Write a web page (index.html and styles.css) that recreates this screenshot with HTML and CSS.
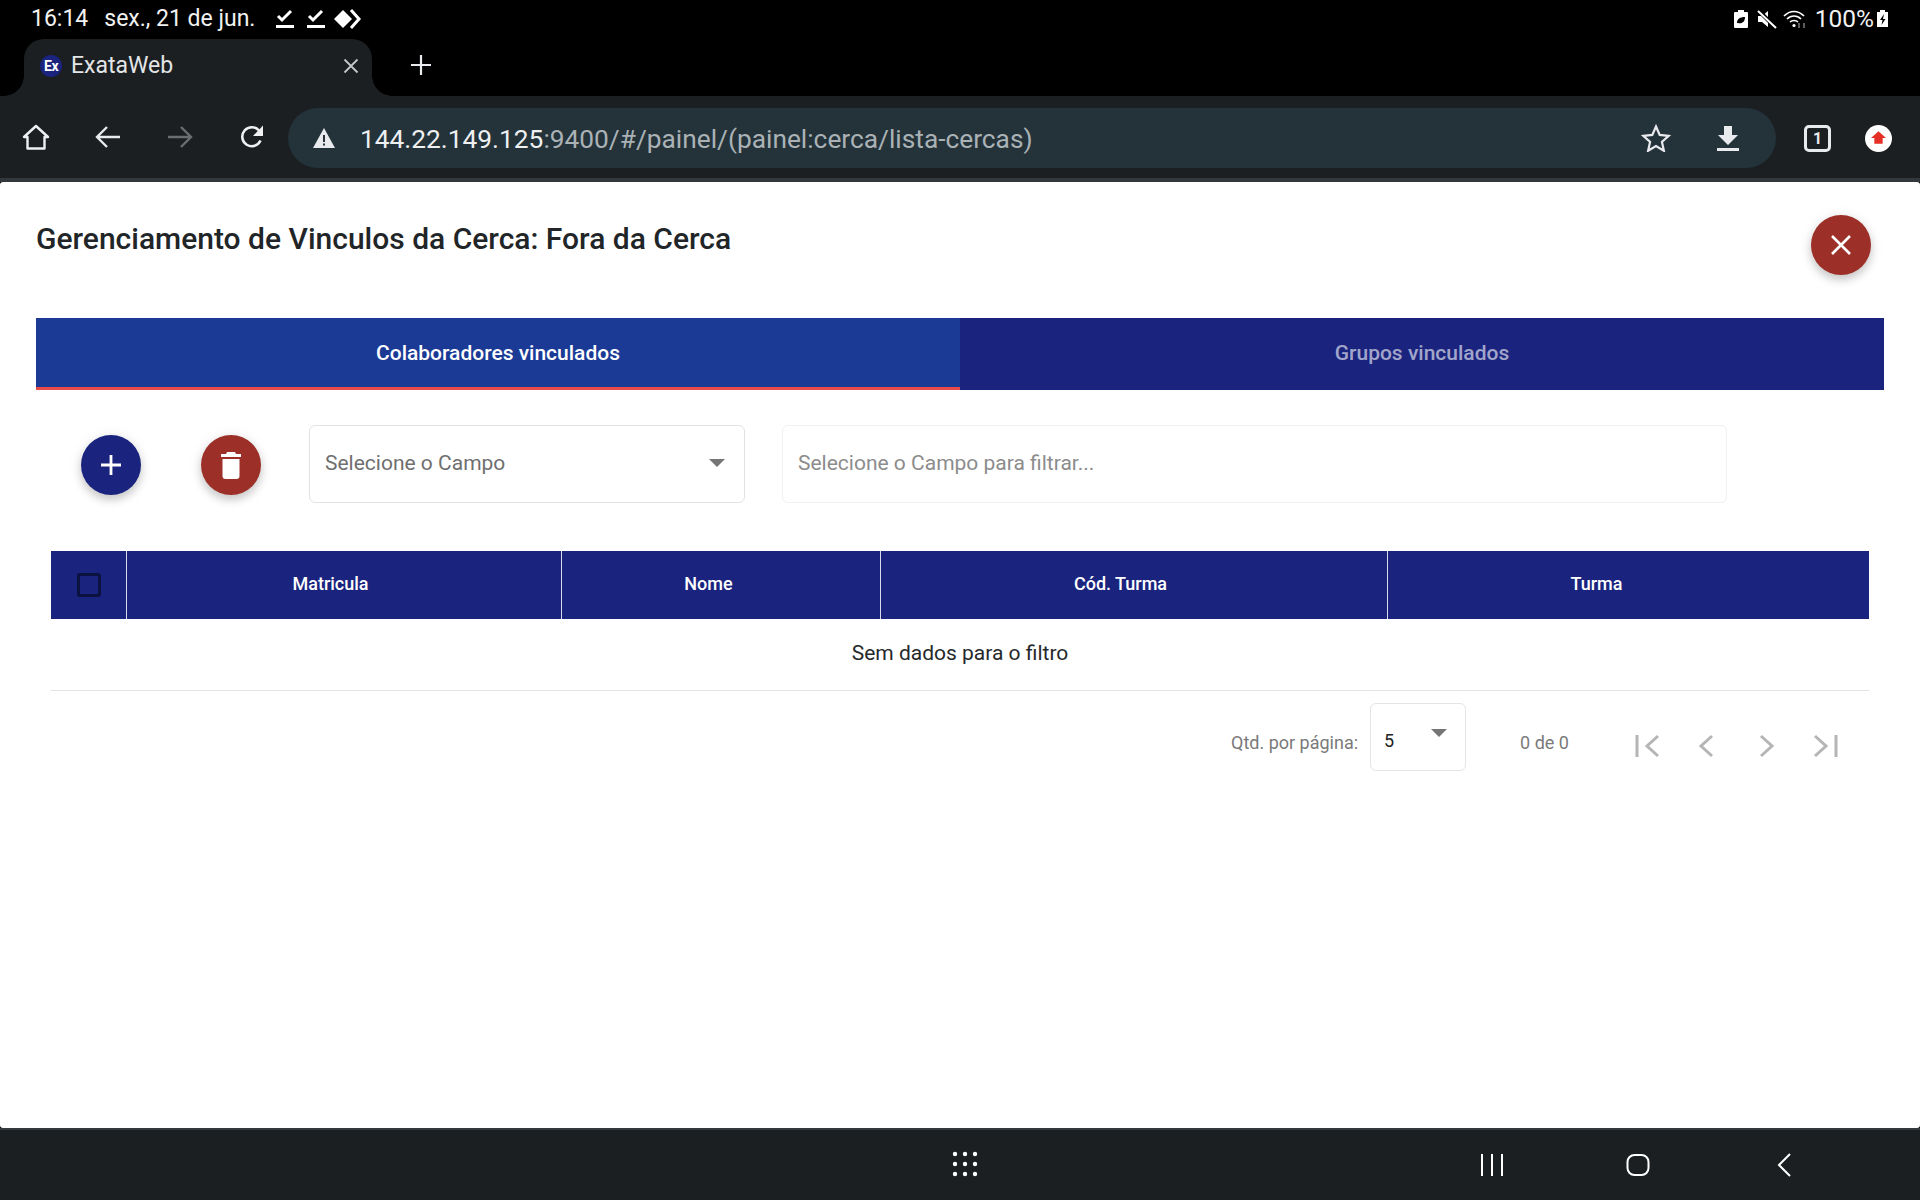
FILE: index.html
```html
<!DOCTYPE html>
<html lang="pt-BR">
<head>
<meta charset="utf-8">
<title>ExataWeb</title>
<link rel="stylesheet" href="styles.css">
</head>
<body>
<div class="screen">
  <div class="status">
    <div class="status-left">
      <span class="time">16:14</span>
      <span class="date">sex., 21 de jun.</span>
      <svg class="si" width="20" height="22" viewBox="0 0 20 22"><path d="M3 8l4 4 9-9" fill="none" stroke="#fff" stroke-width="3"/><rect x="1" y="17" width="18" height="3" fill="#fff"/></svg>
      <svg class="si" width="20" height="22" viewBox="0 0 20 22"><path d="M3 8l4 4 9-9" fill="none" stroke="#fff" stroke-width="3"/><rect x="1" y="17" width="18" height="3" fill="#fff"/></svg>
      <svg class="si-tight" width="28" height="22" viewBox="0 0 28 22"><path d="M10 2l9 9-9 9-9-9z" fill="#fff"/><path d="M18 2l8 9-8 9" fill="none" stroke="#fff" stroke-width="3"/></svg>
    </div>
    <div class="status-right">
      <svg class="sr-leaf" width="16" height="22" viewBox="0 0 16 22"><path d="M5 2h6v2h3a1 1 0 0 1 1 1v14a1 1 0 0 1-1 1H2a1 1 0 0 1-1-1V5a1 1 0 0 1 1-1h3z" fill="#fff"/><path d="M4 15c0-4 3-6 8-6 0 5-3 7-7 6" fill="#000"/></svg>
      <svg class="sr-mute" width="22" height="22" viewBox="0 0 22 22"><path d="M2 8h4l6-5v16l-6-5H2z" fill="#fff"/><path d="M3 3l17 17" stroke="#000" stroke-width="4"/><path d="M2 3l18 17" stroke="#fff" stroke-width="2"/></svg>
      <svg width="26" height="22" viewBox="0 0 26 22"><path d="M2 8c6-6 14-6 20 0M5 11c4-4 10-4 14 0M8 14c2-2 6-2 8 0" fill="none" stroke="#fff" stroke-width="1.7"/><circle cx="12" cy="17.5" r="1.6" fill="#fff"/><path d="M17 15v5M22 20v-5" stroke="#999" stroke-width="1.2"/></svg>
      <span class="pct">100%</span>
      <svg width="13" height="22" viewBox="0 0 13 22"><path d="M4 2h5v2h3v15H1V4h3z" fill="#fff"/><path d="M8 6l-4 6h2.500l-1 5 4-6H7z" fill="#000"/></svg>
    </div>
  </div>

  <div class="tabstrip">
    <div class="tab">
      <span class="favicon">Ex</span>
      <span class="tab-title">ExataWeb</span>
      <svg class="tab-close" width="16" height="16" viewBox="0 0 16 16"><path d="M1.500 1.500l13 13M14.500 1.500l-13 13" stroke="#c4c7c8" stroke-width="1.800"/></svg>
    </div>
    <svg class="newtab" width="22" height="22" viewBox="0 0 22 22"><path d="M11 1v20M1 11h20" stroke="#e8eaed" stroke-width="2.200"/></svg>
  </div>

  <div class="toolbar">
    <svg class="tb-home" width="28" height="28" viewBox="0 0 28 28"><path d="M14 3L2 14h3.500v11.500h17V14H26z" fill="none" stroke="#eef0f1" stroke-width="2.400" stroke-linejoin="round"/></svg>
    <svg class="tb-back" width="26" height="26" viewBox="0 0 26 26"><path d="M25 13H3M12 3L2 13l10 10" fill="none" stroke="#e8eaed" stroke-width="2.400"/></svg>
    <svg class="tb-fwd" width="26" height="26" viewBox="0 0 26 26"><path d="M1 13h22M14 3l10 10-10 10" fill="none" stroke="#6b6e70" stroke-width="2.400"/></svg>
    <svg class="tb-reload" width="26" height="26" viewBox="0 0 26 26"><path d="M21.500 16.500A9.500 9.500 0 1 1 20 6.500" fill="none" stroke="#eef0f1" stroke-width="2.600"/><path d="M24 1.500V12H14z" fill="#eef0f1"/></svg>
    <div class="omnibox">
      <svg class="warn" width="24" height="22" viewBox="0 0 24 22"><path d="M12 1l11 20H1z" fill="#e8eaed"/><rect x="11" y="8" width="2" height="7" fill="#263238"/><rect x="11" y="16.500" width="2" height="2" fill="#263238"/></svg>
      <span class="url"><span class="url-host">144.22.149.125</span>:9400/#/painel/(painel:cerca/lista-cercas)</span>
      <svg class="star" width="30" height="28" viewBox="0 0 30 28"><path d="M15 2.500l3.700 8.400 9.100.9-6.900 6 2 9-7.900-4.700-7.900 4.700 2-9-6.900-6 9.100-.9z" fill="none" stroke="#e8eaed" stroke-width="2.200"/></svg>
      <svg class="dl" width="22" height="26" viewBox="0 0 22 26"><path d="M7 1h8v9h6L11 20 1 10h6z" fill="#e8eaed"/><rect y="23" width="22" height="3" fill="#e8eaed"/></svg>
    </div>
    <div class="tabcount">1</div>
    <div class="update"><svg width="15" height="14" viewBox="0 0 18 16"><path d="M9 0l9 8h-4v7H4V8H0z" fill="#e53027"/></svg></div>
  </div>

  <main class="page">
    <div class="head">
      <h1 class="title">Gerenciamento de Vinculos da Cerca: Fora da Cerca</h1>
      <button class="fab fab-red close-fab" aria-label="Fechar"><svg width="22" height="22" viewBox="0 0 22 22"><path d="M2 2l18 18M20 2L2 20" stroke="#fff" stroke-width="2.600"/></svg></button>
    </div>

    <div class="tabs">
      <div class="tabs-item tabs-active">Colaboradores vinculados</div>
      <div class="tabs-item tabs-idle">Grupos vinculados</div>
    </div>

    <div class="controls">
      <button class="fab fab-blue" aria-label="Adicionar"><svg width="24" height="24" viewBox="0 0 24 24"><path d="M12 2v20M2 12h20" stroke="#fff" stroke-width="2.800"/></svg></button>
      <button class="fab fab-red" aria-label="Excluir"><svg width="22" height="28" viewBox="0 0 22 28"><path d="M7 1h8l1 2h5v3H1V3h5z" fill="#fff"/><path d="M2.500 8h17v17a3 3 0 0 1-3 3h-11a3 3 0 0 1-3-3z" fill="#fff"/></svg></button>
      <div class="field field-select"><span>Selecione o Campo</span><i class="caret"></i></div>
      <div class="field field-input">Selecione o Campo para filtrar...</div>
    </div>

    <div class="grid">
      <div class="grid-head">
        <div class="cell cell-check"><span class="checkbox"></span></div>
        <div class="cell cell-mat">Matricula</div>
        <div class="cell cell-nome">Nome</div>
        <div class="cell cell-cod">Cód. Turma</div>
        <div class="cell cell-turma">Turma</div>
      </div>
      <div class="grid-empty">Sem dados para o filtro</div>
      <div class="pager">
        <span class="pager-label">Qtd. por página:</span>
        <div class="pager-size"><span>5</span><i class="caret caret-up"></i></div>
        <span class="pager-range">0 de 0</span>
        <div class="pager-btns">
          <svg width="26" height="24" viewBox="0 0 26 24"><path d="M2 1v22" stroke="#b5b5b5" stroke-width="3"/><path d="M23 2L12 12l11 10" fill="none" stroke="#b5b5b5" stroke-width="3"/></svg>
          <svg width="26" height="24" viewBox="0 0 26 24"><path d="M18 2L7 12l11 10" fill="none" stroke="#b5b5b5" stroke-width="3"/></svg>
          <svg width="26" height="24" viewBox="0 0 26 24"><path d="M8 2l11 10L8 22" fill="none" stroke="#b5b5b5" stroke-width="3"/></svg>
          <svg width="26" height="24" viewBox="0 0 26 24"><path d="M3 2l11 10L3 22" fill="none" stroke="#b5b5b5" stroke-width="3"/><path d="M24 1v22" stroke="#b5b5b5" stroke-width="3"/></svg>
        </div>
      </div>
    </div>
  </main>

  <div class="navbar">
    <svg class="nav-apps" width="26" height="26" viewBox="0 0 26 26"><g fill="#fff"><circle cx="3" cy="3" r="2.200"/><circle cx="13" cy="3" r="2.200"/><circle cx="23" cy="3" r="2.200"/><circle cx="3" cy="13" r="2.200"/><circle cx="13" cy="13" r="2.200"/><circle cx="23" cy="13" r="2.200"/><circle cx="3" cy="23" r="2.200"/><circle cx="13" cy="23" r="2.200"/><circle cx="23" cy="23" r="2.200"/></g></svg>
    <svg class="nav-recent" width="24" height="24" viewBox="0 0 24 24"><path d="M2 1v22M12 1v22M22 1v22" stroke="#fff" stroke-width="2"/></svg>
    <svg class="nav-home" width="24" height="24" viewBox="0 0 24 24"><rect x="1.500" y="2" width="21" height="20" rx="7" fill="none" stroke="#fff" stroke-width="2"/></svg>
    <svg class="nav-back" width="16" height="24" viewBox="0 0 16 24"><path d="M14 1L3 12l11 11" fill="none" stroke="#fff" stroke-width="2"/></svg>
  </div>
</div>
</body>
</html>
```

FILE: styles.css
```css
* { box-sizing: border-box; }
html, body { margin: 0; padding: 0; }
body { font-family: Roboto, "Liberation Sans", sans-serif; background: #000; }
.screen { width: 1920px; height: 1200px; display: flex; flex-direction: column; overflow: hidden; }

.status { height: 39px; background: #000; color: #f2f2f2; display: flex; justify-content: space-between; align-items: center; padding: 0 31px 2px 31px; font-size: 23px; flex: none; }
.status-left { display: flex; align-items: center; }
.date { margin-left: 16px; margin-right: 20px; }
.si { margin-right: 11px; }
.si-tight { margin-left: -4px; }
.status-right { display: flex; align-items: center; gap: 8px; }
.sr-leaf { margin-right: -1px; }
.sr-mute { margin-right: -4px; }
.pct { font-size: 24.500px; margin: 0 -6px 0 -1px; }

.tabstrip { height: 57px; background: #000; display: flex; align-items: center; flex: none; }
.tab { position: relative; width: 348px; height: 57px; margin-left: 24px; background: #1b1f22; border-radius: 20px 20px 0 0; display: flex; align-items: center; padding: 0 13px 4px 16px; color: #e3e5e6; font-size: 23px; }
.tab::before, .tab::after { content: ""; position: absolute; bottom: 0; width: 20px; height: 20px; }
.tab::before { left: -20px; background: radial-gradient(circle at 0 0, #000 19.500px, #1b1f22 20px); }
.tab::after { right: -20px; background: radial-gradient(circle at 100% 0, #000 19.500px, #1b1f22 20px); }
.favicon { width: 22px; height: 22px; border-radius: 50%; background: #1a237e; color: #fff; font-size: 14px; font-weight: 700; letter-spacing: -.5px; display: flex; align-items: center; justify-content: center; flex: none; }
.tab-title { margin-left: 9px; flex: 1; }
.newtab { margin-left: 38px; margin-top: -6px; }

.toolbar { height: 86px; background: #1b1f22; border-bottom: 4px solid #33383c; display: flex; align-items: center; padding: 0 0 0 22px; flex: none; }
.tb-back { margin-left: 45px; }
.tb-fwd { margin-left: 46px; }
.tb-reload { margin-left: 46px; }
.omnibox { width: 1488px; height: 60px; margin-left: 23px; margin-top: 2px; background: #24323a; border-radius: 30px; display: flex; align-items: center; padding: 0 24px; flex: none; }
.warn { flex: none; }
.url { margin-left: 24px; margin-top: 2px; flex: 1; font-size: 26.300px; color: #aab2b6; }
.url-host { color: #eef0f1; }
.star { margin-right: 46px; }
.dl { margin-right: 13px; }
.tabcount { width: 27px; height: 27px; margin-left: 28px; margin-top: 2px; border: 3px solid #e8eaed; border-radius: 5px; color: #e8eaed; font-size: 16px; font-weight: 700; display: flex; align-items: center; justify-content: center; flex: none; }
.update { width: 27px; height: 27px; margin-left: 34px; margin-top: 2px; border-radius: 50%; background: #fff; display: flex; align-items: center; justify-content: center; flex: none; }

.page { height: 946px; background: #fff; border-radius: 3px; padding: 0 36px; flex: none; display: flex; flex-direction: column; }
.head { height: 136px; display: flex; align-items: flex-start; justify-content: space-between; }
.title { margin: 40px 0 0; font-size: 30px; line-height: 34px; font-weight: 500; color: #212528; }
.fab { width: 60px; height: 60px; border: 0; border-radius: 50%; display: flex; align-items: center; justify-content: center; padding: 0; flex: none; box-shadow: 0 5px 9px rgba(0,0,0,.16), 0 2px 14px rgba(0,0,0,.1); }
.fab-red { background: #9c2f27; }
.fab-blue { background: #1a237e; }
.close-fab { margin: 33px 13px 0 0; }

.tabs { height: 72px; display: flex; flex: none; }
.tabs-item { flex: 1; display: flex; align-items: center; justify-content: center; font-size: 21px; font-weight: 500; color: #fff; background: #1a237e; }
.tabs-active { background: #1a3a96; border-bottom: 3px solid #e84c4a; }
.tabs-idle { color: rgba(255,255,255,.6); padding-bottom: 3px; }

.controls { height: 161px; display: flex; align-items: flex-start; padding: 35px 0 0 45px; gap: 60px; flex: none; }
.controls .fab { margin-top: 10px; }
.field { height: 78px; background: #fff; border: 1px solid #e2e2e2; border-radius: 6px; display: flex; align-items: center; padding: 0 15px 2px; font-size: 21px; color: #6f6f6f; }
.field-select { width: 436px; margin-left: -12px; justify-content: space-between; padding-right: 19px; }
.field-input { width: 945px; margin-left: -23px; border-color: #f0f0f0; color: #8c8c8c; }
.caret { width: 0; height: 0; border-left: 8px solid transparent; border-right: 8px solid transparent; border-top: 8px solid #757575; display: block; }

.grid { margin: 0 15px; display: flex; flex-direction: column; }
.grid-head { height: 68px; background: #1a237e; display: flex; flex: none; }
.cell { display: flex; align-items: center; justify-content: center; color: #fff; font-size: 18px; font-weight: 500; padding-bottom: 4px; border-right: 1px solid #d8dae8; }
.cell-check { width: 76px; padding-bottom: 0; }
.cell-mat { width: 435px; padding-right: 27px; }
.cell-nome { width: 319px; padding-right: 25px; }
.cell-cod { width: 507px; padding-right: 27px; }
.cell-turma { flex: 1; border-right: 0; padding-right: 64px; }
.checkbox { width: 24px; height: 24px; border: 3px solid #0b1140; border-radius: 3px; display: block; }
.grid-empty { height: 72px; border-bottom: 1px solid #e3e3e3; display: flex; align-items: center; justify-content: center; font-size: 21px; color: #26292b; padding-bottom: 3px; flex: none; }

.pager { height: 102px; display: flex; align-items: center; font-size: 18px; color: #7a7a7a; }
.pager-label { margin-left: 1180px; }
.pager-size { width: 96px; height: 68px; margin-left: 12px; margin-top: -10px; border: 1px solid #e4e4e4; border-radius: 6px; display: flex; justify-content: space-between; align-items: flex-start; padding: 26px 18px 0 13px; color: #222; }
.caret-up { margin-top: -1px; }
.pager-range { margin-left: 54px; }
.pager-btns { display: flex; gap: 33px; margin-left: 66px; padding-top: 8px; }

.navbar { height: 72px; background: #1b1f22; border-top: 2px solid #33383c; display: flex; align-items: center; flex: none; }
.nav-apps { margin-left: 952px; margin-top: -2px; }
.nav-recent { margin-left: 502px; }
.nav-home { margin-left: 122px; }
.nav-back { margin-left: 126px; }
```
